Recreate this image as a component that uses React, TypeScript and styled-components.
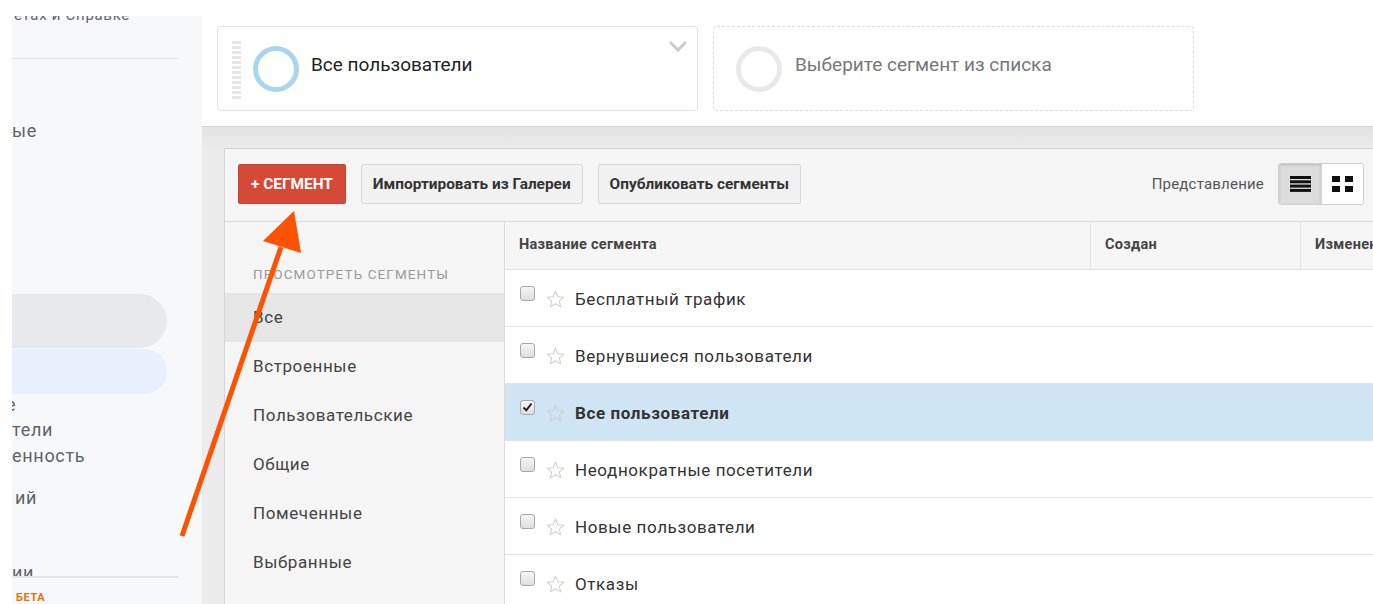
import React from 'react';
import styled, { createGlobalStyle } from 'styled-components';

const GlobalStyle = createGlobalStyle`
  html, body {
    margin: 0;
    padding: 0;
    background: #ffffff;
    font-family: Roboto, "Liberation Sans", Arial, sans-serif;
    overflow: hidden;
  }
  * { box-sizing: border-box; }
`;

const Page = styled.div`
  position: relative;
  display: grid;
  grid-template-columns: 12px 190px 1fr;
  width: 1373px;
  height: 604px;
  overflow: hidden;
`;

/* ---------- left navigation (scrolled out of view) ---------- */

const Sidebar = styled.aside`
  grid-column: 2;
  margin-top: 16px;
  height: 588px;
  background: #f7f8fa;
  overflow: hidden;
  display: flex;
  flex-direction: column;
`;

const NavText = styled.div<{ $top?: number; $size?: number; $shift?: number }>`
  margin-top: ${p => p.$top ?? 0}px;
  margin-left: ${p => p.$shift ?? 0}px;
  height: 20px;
  line-height: 20px;
  font-size: ${p => p.$size ?? 18}px;
  letter-spacing: 0.7px;
  color: #5f6368;
  white-space: nowrap;
  overflow: hidden;
`;

const NavCut = styled(NavText)`
  height: 13px;
`;

const NavDivider = styled.div<{ $top: number }>`
  margin-top: ${p => p.$top}px;
  width: 166px;
  height: 1px;
  background: #e2e3e6;
`;

const NavPill = styled.div<{ $tone: 'grey' | 'blue'; $h: number; $top: number }>`
  margin-top: ${p => p.$top}px;
  width: 155px;
  height: ${p => p.$h}px;
  border-radius: 0 28px 28px 0;
  background: ${p => (p.$tone === 'grey' ? '#e8e9ec' : '#e8effd')};
`;

const NavFooter = styled.div`
  margin-top: auto;
  width: 166px;
  border-top: 2px solid #e6e7ea;
  padding: 13px 0 0 4px;
  font-size: 11px;
  font-weight: 700;
  letter-spacing: 0.6px;
  color: #e8710a;
`;

/* ---------- main area ---------- */

const Main = styled.main`
  grid-column: 3;
  display: flex;
  flex-direction: column;
  min-width: 0;
`;

const SegmentBar = styled.div`
  height: 126px;
  padding: 26px 0 0 15px;
  display: flex;
  gap: 15px;
  background: #ffffff;
`;

const SegmentCard = styled.div<{ $empty?: boolean }>`
  position: relative;
  width: 481px;
  height: 85px;
  border: 1px ${p => (p.$empty ? 'dashed #dcdcdc' : 'solid #e2e2e2')};
  border-radius: 4px;
  display: flex;
  align-items: center;
  padding-left: ${p => (p.$empty ? 22 : 14)}px;
`;

const DragHandle = styled.div`
  width: 9px;
  height: 58px;
  margin-top: 2px;
  background: repeating-linear-gradient(
    to bottom,
    #e6e6e6 0 3px,
    transparent 3px 5px
  );
`;

const Ring = styled.div<{ $color: string; $gap?: number }>`
  width: 46px;
  height: 46px;
  border-radius: 50%;
  border: 5px solid ${p => p.$color};
  margin-left: ${p => p.$gap ?? 0}px;
  flex-shrink: 0;
`;

const SegmentName = styled.span<{ $muted?: boolean }>`
  margin-left: ${p => (p.$muted ? 13 : 12)}px;
  margin-bottom: 9px;
  font-size: 19px;
  color: ${p => (p.$muted ? '#777777' : '#222222')};
`;

const Chevron = styled.svg`
  position: absolute;
  top: 13px;
  right: 9px;
`;

const Backdrop = styled.div`
  flex: 1;
  border-top: 1px solid #d2d2d2;
  background: linear-gradient(#e3e3e3, #ececec 24px);
  padding: 21px 0 0 22px;
  display: flex;
  min-height: 0;
`;

const Panel = styled.section`
  flex: 1;
  border-top: 1px solid #d3d3d3;
  border-left: 1px solid #d6d6d6;
  background: #f5f5f5;
  display: flex;
  flex-direction: column;
  min-width: 0;
`;

const Toolbar = styled.div`
  height: 73px;
  flex-shrink: 0;
  display: flex;
  align-items: center;
  gap: 15px;
  padding: 0 9px 3px 13px;
  border-bottom: 1px solid #dadada;
`;

const Button = styled.button<{ $primary?: boolean }>`
  height: 40px;
  padding: 0 ${p => (p.$primary ? 12 : 11)}px;
  border-radius: 2px;
  border: 1px solid ${p => (p.$primary ? '#c9443a' : '#d8d8d8')};
  background: ${p => (p.$primary ? '#d64937' : '#f1f1f1')};
  color: ${p => (p.$primary ? '#ffffff' : '#333333')};
  font-family: Roboto, "Liberation Sans", Arial, sans-serif;
  font-size: 15.4px;
  font-weight: 700;
  white-space: nowrap;
`;

const ViewLabel = styled.span`
  margin-left: auto;
  font-size: 15px;
  letter-spacing: 0.2px;
  color: #555555;
`;

const ViewToggle = styled.div`
  display: flex;
  height: 42px;
  border: 1px solid #cfcfcf;
  border-radius: 3px;
  overflow: hidden;
  margin-left: -1px;
`;

const ToggleButton = styled.div<{ $active?: boolean }>`
  width: 42px;
  display: flex;
  align-items: center;
  justify-content: center;
  background: ${p => (p.$active ? '#dddddd' : '#ffffff')};
  box-shadow: ${p => (p.$active ? 'inset 0 1px 3px rgba(0,0,0,0.18)' : 'none')};
  & + & { border-left: 1px solid #d6d6d6; }
`;

const Body = styled.div`
  flex: 1;
  display: grid;
  grid-template-columns: 280px 1fr;
  min-height: 0;
`;

const Filters = styled.nav`
  border-right: 1px solid #dcdcdc;
  padding-top: 42px;
`;

const FiltersTitle = styled.div`
  height: 20px;
  line-height: 20px;
  padding-left: 28px;
  margin-bottom: 9px;
  font-size: 13.5px;
  letter-spacing: 1.1px;
  color: #9a9a9a;
  text-transform: uppercase;
`;

const FilterItem = styled.div<{ $active?: boolean }>`
  height: 49px;
  line-height: 48px;
  padding-left: 28px;
  font-size: 17px;
  letter-spacing: 0.6px;
  color: #444444;
  background: ${p => (p.$active ? '#e6e6e6' : 'transparent')};
`;

const Table = styled.div`
  display: flex;
  flex-direction: column;
  background: #ffffff;
  min-width: 0;
`;

const HeadRow = styled.div`
  height: 48px;
  flex-shrink: 0;
  display: grid;
  grid-template-columns: 585px 210px 1fr;
  background: #f6f6f6;
  border-bottom: 1px solid #e0e0e0;
`;

const HeadCell = styled.div`
  padding-left: 14px;
  line-height: 46px;
  font-size: 14.5px;
  letter-spacing: 0.3px;
  font-weight: 700;
  color: #444444;
  white-space: nowrap;
  overflow: hidden;
  & + & { border-left: 1px solid #e4e4e4; }
`;

const Row = styled.div<{ $selected?: boolean }>`
  height: 57px;
  flex-shrink: 0;
  display: flex;
  align-items: center;
  padding: 2px 0 0 15px;
  border-bottom: 1px solid #e3e3e3;
  background: ${p => (p.$selected ? '#cfe5f3' : '#ffffff')};
`;

const Checkbox = styled.span`
  width: 15px;
  height: 15px;
  margin-top: -12px;
  border: 1px solid #a8a8a8;
  border-radius: 3px;
  background: linear-gradient(#f6f6f6, #dedede);
  display: flex;
  align-items: center;
  justify-content: center;
`;

const Star = styled.svg`
  margin-left: 10px;
  flex-shrink: 0;
`;

const RowName = styled.span<{ $bold?: boolean }>`
  margin-left: 9px;
  font-size: 17px;
  letter-spacing: 0.6px;
  font-weight: ${p => (p.$bold ? 700 : 400)};
  color: #333333;
`;

const Annotation = styled.svg`
  position: absolute;
  left: 0;
  top: 0;
  pointer-events: none;
`;

const filters = ['Все', 'Встроенные', 'Пользовательские', 'Общие', 'Помеченные', 'Выбранные'];

const segments = [
  { name: 'Бесплатный трафик' },
  { name: 'Вернувшиеся пользователи' },
  { name: 'Все пользователи', selected: true },
  { name: 'Неоднократные посетители' },
  { name: 'Новые пользователи' },
  { name: 'Отказы' },
];

const StarIcon = () => (
  <Star width="21" height="21" viewBox="0 0 24 24">
    <path
      d="M12 2.6l2.8 6.2 6.7.6-5.1 4.4 1.5 6.6L12 16.9l-5.9 3.5 1.5-6.6-5.1-4.4 6.7-.6z"
      fill="none"
      stroke="#cfcfcf"
      strokeWidth="1.2"
      strokeLinejoin="round"
    />
  </Star>
);

const App: React.FC = () => (
  <>
    <GlobalStyle />
    <Page>
      <Sidebar>
        <NavText $top={-11} $size={15} $shift={2}>
          етах и Справке
        </NavText>
        <NavDivider $top={33} />
        <NavText $top={62}>ые</NavText>
        <NavPill $tone="grey" $h={54} $top={153} />
        <NavPill $tone="blue" $h={45} $top={1} />
        <NavText $top={1} $shift={-6}>е</NavText>
        <NavText $top={5}>тели</NavText>
        <NavText $top={6}>енность</NavText>
        <NavText $top={22} $shift={3}>ий</NavText>
        <NavCut $top={55}>ии</NavCut>
        <NavFooter>БЕТА</NavFooter>
      </Sidebar>

      <Main>
        <SegmentBar>
          <SegmentCard>
            <DragHandle />
            <Ring $color="#a8d6ee" $gap={12} />
            <SegmentName>Все пользователи</SegmentName>
            <Chevron width="20" height="12" viewBox="0 0 20 12">
              <path d="M2 2l8 8 8-8" fill="none" stroke="#cccccc" strokeWidth="3" />
            </Chevron>
          </SegmentCard>
          <SegmentCard $empty>
            <Ring $color="#e9e9e9" />
            <SegmentName $muted>Выберите сегмент из списка</SegmentName>
          </SegmentCard>
        </SegmentBar>

        <Backdrop>
          <Panel>
            <Toolbar>
              <Button $primary>+ СЕГМЕНТ</Button>
              <Button>Импортировать из Галереи</Button>
              <Button>Опубликовать сегменты</Button>
              <ViewLabel>Представление</ViewLabel>
              <ViewToggle>
                <ToggleButton $active>
                  <svg width="21" height="16" viewBox="0 0 21 16">
                    <rect x="0" y="0" width="21" height="3" fill="#111" />
                    <rect x="0" y="4.3" width="21" height="3" fill="#111" />
                    <rect x="0" y="8.6" width="21" height="3" fill="#111" />
                    <rect x="0" y="12.9" width="21" height="3" fill="#111" />
                  </svg>
                </ToggleButton>
                <ToggleButton>
                  <svg width="21" height="16" viewBox="0 0 21 16">
                    <rect x="0" y="0" width="8" height="6" fill="#111" />
                    <rect x="13" y="0" width="8" height="6" fill="#111" />
                    <rect x="0" y="10" width="8" height="6" fill="#111" />
                    <rect x="13" y="10" width="8" height="6" fill="#111" />
                  </svg>
                </ToggleButton>
              </ViewToggle>
            </Toolbar>

            <Body>
              <Filters>
                <FiltersTitle>Просмотреть сегменты</FiltersTitle>
                {filters.map((f, i) => (
                  <FilterItem key={f} $active={i === 0}>{f}</FilterItem>
                ))}
              </Filters>

              <Table>
                <HeadRow>
                  <HeadCell>Название сегмента</HeadCell>
                  <HeadCell>Создан</HeadCell>
                  <HeadCell>Изменен</HeadCell>
                </HeadRow>
                {segments.map(s => (
                  <Row key={s.name} $selected={s.selected}>
                    <Checkbox>
                      {s.selected && (
                        <svg width="11" height="10" viewBox="0 0 11 10">
                          <path d="M1.5 5.5l2.8 2.8L9.5 1.5" fill="none" stroke="#222" strokeWidth="2" />
                        </svg>
                      )}
                    </Checkbox>
                    <StarIcon />
                    <RowName $bold={s.selected}>{s.name}</RowName>
                  </Row>
                ))}
              </Table>
            </Body>
          </Panel>
        </Backdrop>
      </Main>

      <Annotation width="1373" height="604" viewBox="0 0 1373 604">
        <line x1="182" y1="536" x2="281" y2="247" stroke="#ff5200" strokeWidth="5" />
        <polygon points="294,211 263,241 301,253" fill="#ff5200" />
      </Annotation>
    </Page>
  </>
);

export default App;
